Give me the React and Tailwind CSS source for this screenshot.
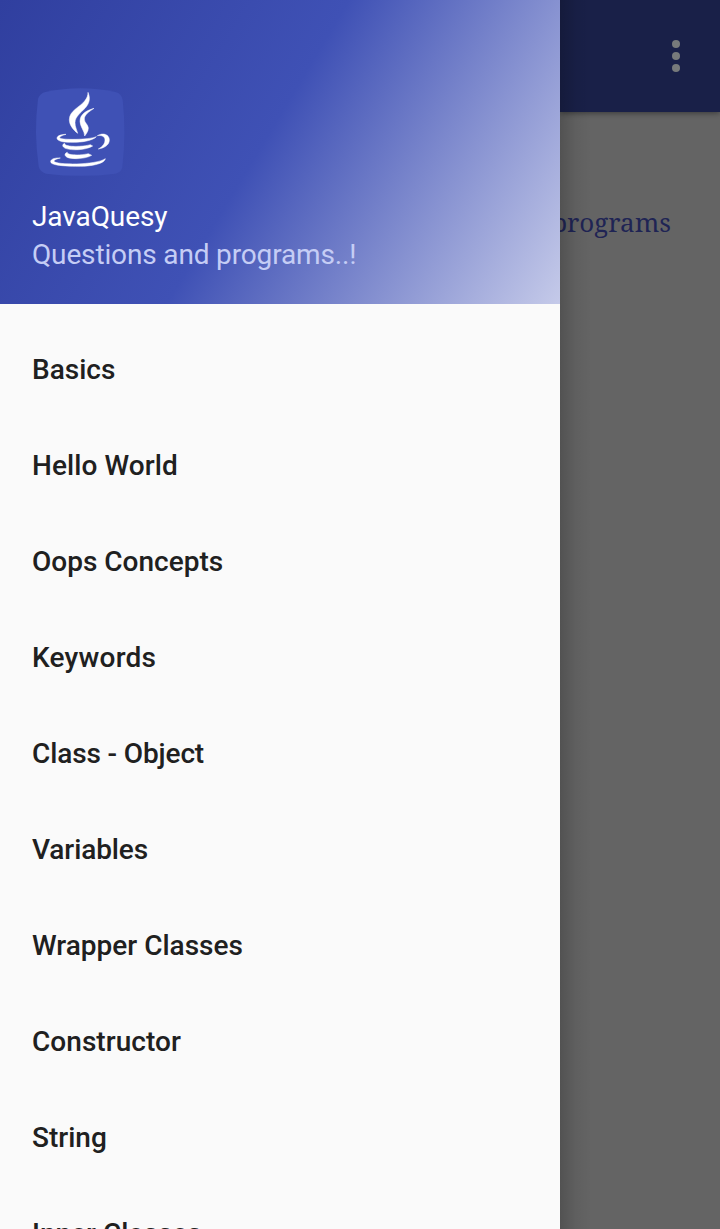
const ITEMS = [
  { label: 'Basics', tracking: 'tracking-normal' },
  { label: 'Hello World', tracking: 'tracking-[0.08px]' },
  { label: 'Oops Concepts', tracking: 'tracking-normal' },
  { label: 'Keywords', tracking: 'tracking-[0.22px]' },
  { label: 'Class - Object', tracking: 'tracking-[-0.12px]' },
  { label: 'Variables', tracking: 'tracking-[-0.1px]' },
  { label: 'Wrapper Classes', tracking: 'tracking-normal' },
  { label: 'Constructor', tracking: 'tracking-[0.05px]' },
  { label: 'String', tracking: 'tracking-normal' },
  { label: 'Inner Classes', tracking: 'tracking-normal' },
];

function JavaLogo() {
  return (
    <svg className="block size-24" viewBox="36 27 288 288" aria-hidden="true">
      <path
        d="M76 51Q182 29 286 51Q305 56 308 75Q319 172 307 277Q303 293 287 296Q182 309 78 296Q60 292 56 274Q41 172 54 73Q58 56 76 51Z"
        fill="#3f51b5"
      />
      <g fill="#ffffff" stroke="#ffffff" strokeWidth="1.5" strokeLinejoin="round">
        <path d="M204 52C211 69 210 83 195 100C182 113 165 126 165 143C165 155 170 163 173 175C158 163 148 149 148 134C148 107 180 96 194 78C201 69 204 62 204 52Z" />
        <path d="M222 100C207 110 193 120 193 132C193 143 204 148 205 159C205 170 198 177 194 183C194 168 180 155 180 139C180 118 198 107 222 100Z" />
        <path d="M138 178C127 181 118 186 119 189C123 195 207 195 229 185C217 198 181 203 151 202C128 202 110 197 111 189C112 181 127 178 138 178Z" />
        <path d="M232 182C249 172 268 178 268 195C268 210 253 219 235 222C249 214 255 205 255 195C255 185 247 180 232 182Z" />
        <path d="M134 205C132 217 187 216 211 209L218 213C197 226 155 227 136 220C126 215 126 208 134 205Z" />
        <path d="M142 232C140 242 184 241 205 236L215 241C196 252 162 253 144 248C132 243 133 235 142 232Z" />
        <path d="M121 249C108 252 101 256 102 259C106 270 228 271 256 251C253 268 207 275 166 274C124 273 92 270 92 260C92 251 108 248 121 249Z" />
      </g>
    </svg>
  );
}

function Drawer() {
  return (
    <aside className="relative z-10 flex h-full w-[560px] shrink-0 flex-col overflow-hidden bg-[#fafafa]">
      <header className="flex h-[304px] shrink-0 flex-col bg-[linear-gradient(121deg,#303f9f_0%,#3f51b5_47%,#c5cae9_100%)] px-8 pt-[84px] text-[28px] leading-[38px]">
        <JavaLogo />
        <div className="mt-[18px] tracking-[-0.1px] text-white">JavaQuesy</div>
        <div className="tracking-[-0.15px] text-[#c5cdf5]">Questions and programs..!</div>
      </header>
      <nav className="flex flex-col pt-[18px]">
        {ITEMS.map(({ label, tracking }) => (
          <a
            key={label}
            className={`flex h-24 shrink-0 items-center px-8 text-[28px] font-medium text-[#202020] ${tracking}`}
          >
            {label}
          </a>
        ))}
      </nav>
    </aside>
  );
}

function Page() {
  return (
    <main className="relative flex h-full min-w-0 flex-1 flex-col overflow-hidden bg-[#646464]">
      <div className="relative flex h-28 shrink-0 items-center justify-end bg-[#192048] pr-10 shadow-[0_1px_6px_rgba(0,0,0,0.45)]">
        <div className="flex flex-col gap-1">
          <span className="size-2 rounded-full bg-[#777a7b]" />
          <span className="size-2 rounded-full bg-[#777a7b]" />
          <span className="size-2 rounded-full bg-[#777a7b]" />
        </div>
      </div>
      <div className="flex justify-end pt-[90px] pr-[49px]">
        <p className="font-['Noto_Serif','DejaVu_Serif_Condensed','DejaVu_Serif',serif] text-[26px] leading-10 whitespace-nowrap text-[#1f2454]">
          Questions and programs
        </p>
      </div>
      <div className="absolute inset-y-0 left-0 w-8 bg-linear-to-r from-black/18 via-black/5 to-transparent" />
    </main>
  );
}

export default function App() {
  return (
    <div className="flex h-[1229px] w-[720px] overflow-hidden font-['Roboto',sans-serif]">
      <Drawer />
      <Page />
    </div>
  );
}
